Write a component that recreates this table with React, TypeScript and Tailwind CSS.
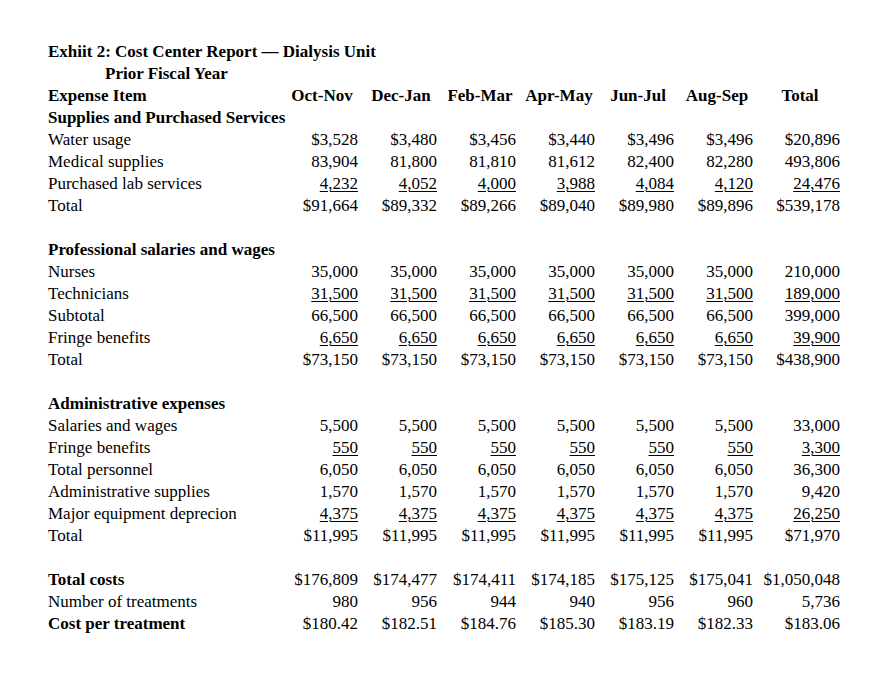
import React from "react";

type Row = {
  label?: string;
  values?: string[];
  bold?: boolean;
  underline?: boolean;
};

const headers = ["Oct-Nov", "Dec-Jan", "Feb-Mar", "Apr-May", "Jun-Jul", "Aug-Sep", "Total"];

const rows: Row[] = [
  { label: "Supplies and Purchased Services", bold: true },
  { label: "Water usage", values: ["$3,528", "$3,480", "$3,456", "$3,440", "$3,496", "$3,496", "$20,896"] },
  { label: "Medical supplies", values: ["83,904", "81,800", "81,810", "81,612", "82,400", "82,280", "493,806"] },
  { label: "Purchased lab services", values: ["4,232", "4,052", "4,000", "3,988", "4,084", "4,120", "24,476"], underline: true },
  { label: "Total", values: ["$91,664", "$89,332", "$89,266", "$89,040", "$89,980", "$89,896", "$539,178"] },
  {},
  { label: "Professional salaries and wages", bold: true },
  { label: "Nurses", values: ["35,000", "35,000", "35,000", "35,000", "35,000", "35,000", "210,000"] },
  { label: "Technicians", values: ["31,500", "31,500", "31,500", "31,500", "31,500", "31,500", "189,000"], underline: true },
  { label: "Subtotal", values: ["66,500", "66,500", "66,500", "66,500", "66,500", "66,500", "399,000"] },
  { label: "Fringe benefits", values: ["6,650", "6,650", "6,650", "6,650", "6,650", "6,650", "39,900"], underline: true },
  { label: "Total", values: ["$73,150", "$73,150", "$73,150", "$73,150", "$73,150", "$73,150", "$438,900"] },
  {},
  { label: "Administrative expenses", bold: true },
  { label: "Salaries and wages", values: ["5,500", "5,500", "5,500", "5,500", "5,500", "5,500", "33,000"] },
  { label: "Fringe benefits", values: ["550", "550", "550", "550", "550", "550", "3,300"], underline: true },
  { label: "Total personnel", values: ["6,050", "6,050", "6,050", "6,050", "6,050", "6,050", "36,300"] },
  { label: "Administrative supplies", values: ["1,570", "1,570", "1,570", "1,570", "1,570", "1,570", "9,420"] },
  { label: "Major equipment deprecion", values: ["4,375", "4,375", "4,375", "4,375", "4,375", "4,375", "26,250"], underline: true },
  { label: "Total", values: ["$11,995", "$11,995", "$11,995", "$11,995", "$11,995", "$11,995", "$71,970"] },
  {},
  { label: "Total costs", bold: true, values: ["$176,809", "$174,477", "$174,411", "$174,185", "$175,125", "$175,041", "$1,050,048"] },
  { label: "Number of treatments", values: ["980", "956", "944", "940", "956", "960", "5,736"] },
  { label: "Cost per treatment", bold: true, values: ["$180.42", "$182.51", "$184.76", "$185.30", "$183.19", "$182.33", "$183.06"] },
];

const grid = "grid grid-cols-[231px_79px_79px_79px_79px_79px_79px_87px] h-[22px] leading-[22px] whitespace-nowrap";

export default function App() {
  return (
    <div
      className="min-h-[681px] bg-white pl-[48px] pt-[41px] text-[17px] text-black"
      style={{ fontFamily: '"Liberation Serif", "Times New Roman", serif' }}
    >
      <div className="h-[22px] leading-[22px] font-bold whitespace-nowrap">
        Exhiit 2: Cost Center Report — Dialysis Unit
      </div>
      <div className="h-[22px] leading-[22px] font-bold whitespace-nowrap pl-[57px]">
        Prior Fiscal Year
      </div>
      <div className={grid + " font-bold"}>
        <div>Expense Item</div>
        {headers.map((h) => (
          <div key={h} className="text-center pl-[7px]">
            {h}
          </div>
        ))}
      </div>
      {rows.map((r, i) => (
        <div key={i} className={grid}>
          <div className={r.bold ? "font-bold" : ""}>{r.label}</div>
          {r.values?.map((v, j) => (
            <div key={j} className="text-right">
              <span className={r.underline ? "underline decoration-1 underline-offset-[2px]" : ""}>{v}</span>
            </div>
          ))}
        </div>
      ))}
    </div>
  );
}
